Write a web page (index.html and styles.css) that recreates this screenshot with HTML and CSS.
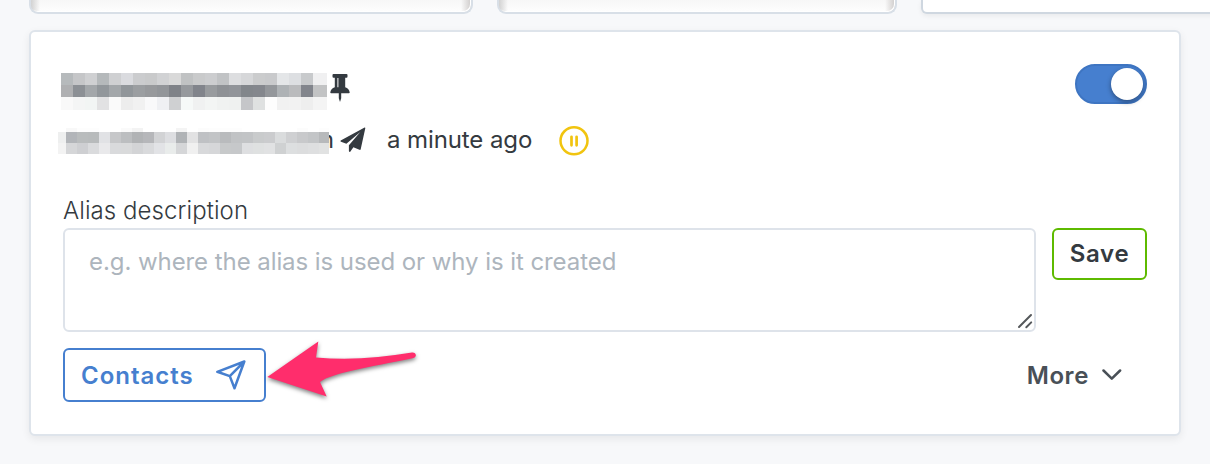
FILE: index.html
```html
<!DOCTYPE html>
<html lang="en">
<head>
<meta charset="utf-8">
<title>Aliases</title>
<link rel="stylesheet" href="styles.css">
</head>
<body>
<div class="filters">
  <div class="filter filter-search"></div>
  <div class="filter filter-sort"></div>
  <div class="filter-button"></div>
</div>
<main class="card">
  <header class="head">
    <div class="identity">
      <div class="alias-row">
        <svg class="mosaic" id="alias-mosaic" width="269" height="48"></svg>
        <svg class="pin" width="20" height="28" viewBox="0 0 20 28" fill="#343a40"><path d="M3.500 0h13q1 0 1 1v1.600q0 1.200-1 1.200h-1.300v9.400c2.600.8 4.300 2.600 4.500 5.300q0 .7-.8.700h-7.700v5l-1.200 3.800-1.200-3.800v-5H1.100q-.8 0-.8-.7c.2-2.700 1.900-4.500 4.500-5.300V3.800H3.500q-1 0-1-1.200V1q0-1 1-1z"/><path d="M7.400 4h1v9.300h-1z" fill="#fff"/></svg>
      </div>
      <div class="activity-row">
        <svg class="mosaic" id="mailbox-mosaic" width="271" height="30"></svg>
        <span class="mailbox-tail">m</span>
        <svg class="sent" width="26" height="26" viewBox="0 0 26 26" fill="#343a40"><path d="M24.600.5.700 13.600q-.7.700.3 1.100l5.400 2.100L20.300 5 8.900 18.200v5.900c.1.900 1 1.100 1.500.3l3-4.100 6 2.500c.8.300 1.200 0 1.300-.6L25.300 1.200q.1-.9-.7-.7z"/></svg>
        <span class="time">a minute ago</span>
        <svg class="pause" width="30" height="30" viewBox="0 0 30 30" fill="none" stroke="#f1c40f"><circle cx="15" cy="14.800" r="13.500" stroke-width="2.500"/><path d="M12.500 10.800v8.500M17.600 10.800v8.500" stroke-width="2.700" stroke-linecap="round"/></svg>
      </div>
    </div>
    <div class="switch"><span class="knob"></span></div>
  </header>
  <div class="label">Alias description</div>
  <div class="description">
    <div class="textarea">
      <span>e.g. where the alias is used or why is it created</span>
      <svg class="grip" width="16" height="16" viewBox="0 0 16 16" stroke="#55585b" stroke-width="2" stroke-linecap="round"><path d="M2 14 14 2M9.300 14.300l4.900-4.900"/></svg>
    </div>
    <div class="save">Save</div>
  </div>
  <footer class="foot">
    <div class="contacts">
      <span>Contacts</span>
      <svg width="30" height="30" viewBox="0 0 30 30" fill="none" stroke="#467fcf" stroke-width="2.500" stroke-linejoin="round"><path d="M28.300 1.500 1.300 11.800l12.500 4.300 4.700 12.200zM28.300 1.500 13.800 16.100"/></svg>
    </div>
    <div class="more">
      <span>More</span>
      <svg width="20" height="12" viewBox="0 0 20 12" fill="none" stroke="#495057" stroke-width="2.500" stroke-linecap="round" stroke-linejoin="round"><path d="m1.500 1.500 8.300 8.200 8.300-8.200"/></svg>
    </div>
    <svg class="arrow" width="160" height="66" viewBox="0 0 160 66"><path d="M2.300 41 53.300 5.500 51 21.500C83 24.500 115 22 147 16.500 151 16 152.500 20.500 148.500 22 120 28.500 67 36 55 46L61.700 60.500z" fill="#ff2d6c"/></svg>
  </footer>
</main>
<script src="mosaic.js"></script>
</body>
</html>
```

FILE: styles.css
```css
* { box-sizing: border-box; }
body {
  margin: 0;
  width: 1210px;
  height: 464px;
  overflow: hidden;
  background: #f7f8fa;
  color: #343a40;
  font-family: Inter, "Liberation Sans", sans-serif;
  font-size: 24px;
  line-height: 30px;
}
svg { display: block; flex: none; }
.filters { display: flex; height: 14px; padding-left: 29px; }
.filter {
  height: 14px;
  border: 2px solid #d8dfe7;
  border-top: 0;
  border-radius: 0 0 9px 9px;
  background:
    linear-gradient(90deg, #d2d2d2, transparent 9px, transparent calc(100% - 10px), #cfcccb),
    linear-gradient(#f7f7f7, #fefefe);
  box-shadow: inset -1px -1px 0 #fff;
  flex: none;
}
.filter-search { width: 444px; }
.filter-sort { width: 400px; margin-left: 24px; }
.filter-button {
  width: 330px;
  flex: none;
  margin-left: 24px;
  border: 2px solid #cfd7e0;
  border-top: 0;
  border-radius: 0 0 0 6px;
  background: #fff;
  box-shadow: 0 2px 5px rgba(0, 0, 0, .06);
}
.card {
  width: 1152px;
  height: 406px;
  margin: 16px 0 0 29px;
  padding: 32px 32px 0;
  border: 2px solid #dee4eb;
  border-radius: 6px;
  background: #fff;
  box-shadow: 0 3px 8px rgba(0, 0, 0, .07);
}
.head { display: flex; justify-content: space-between; height: 130px; }
.alias-row { display: flex; margin-left: -5px; height: 61px; }
.pin { margin: 10px 0 0 3px; }
.activity-row { display: flex; margin-left: -5px; height: 30px; }
.mosaic { position: relative; z-index: 1; }
.mailbox-tail { width: 21px; margin-left: -16px; }
.sent { margin: 2px 0 0 6px; }
.time { margin: 0 0 0 21px; width: 147px; letter-spacing: -.1px; white-space: nowrap; }
.pause { margin: 1px 0 0 25px; }
.switch {
  display: flex;
  justify-content: flex-end;
  align-items: center;
  width: 72px;
  height: 40px;
  padding-right: 2px;
  border: 2px solid #3e75c2;
  border-radius: 20px;
  background: #467fcf;
}
.knob { width: 32px; height: 32px; border-radius: 50%; background: #fff; box-shadow: 0 2px 5px rgba(0, 0, 0, .4); }
.label { height: 34px; padding-top: 2px; font-weight: 300; letter-spacing: .07px; }
.description { display: flex; justify-content: space-between; align-items: flex-start; }
.textarea {
  display: flex;
  justify-content: space-between;
  width: 973px;
  height: 104px;
  padding: 17px 1px 1px 24px;
  border: 2px solid #dee3ea;
  border-radius: 6px;
  color: #adb5bd;
  letter-spacing: -.07px;
}
.grip { align-self: flex-end; }
.save {
  width: 95px;
  height: 52px;
  padding-top: 9px;
  border: 2px solid #5eba00;
  border-radius: 6px;
  font-weight: 600;
  letter-spacing: .7px;
  text-align: center;
}
.foot { position: relative; display: flex; justify-content: space-between; margin-top: 16px; }
.contacts {
  display: flex;
  justify-content: space-between;
  width: 203px;
  height: 54px;
  padding: 10px 18px 0 16px;
  border: 2px solid #467fcf;
  border-radius: 6px;
  color: #467fcf;
  font-weight: 600;
  letter-spacing: 1px;
}
.contacts span { padding-top: 1px; }
.more { display: flex; gap: 13px; padding: 13px 25px 0 0; color: #495057; font-weight: 600; letter-spacing: .6px; }
.more svg { margin-top: 8px; }
.arrow { position: absolute; left: 202px; top: -12px; filter: drop-shadow(0 2px 2px rgba(0, 0, 0, .5)); }
```

FILE: mosaic.js
```js
// Paints rows of flat tiles over the redacted addresses.
function paint(id, xs, ys, rows) {
  const svg = document.getElementById(id);
  rows.forEach((row, r) => row.split(" ").forEach((color, c) => {
    const rect = document.createElementNS("http://www.w3.org/2000/svg", "rect");
    rect.setAttribute("x", xs[c]);
    rect.setAttribute("y", ys[r]);
    rect.setAttribute("width", xs[c + 1] - xs[c]);
    rect.setAttribute("height", ys[r + 1] - ys[r]);
    rect.setAttribute("fill", "#" + color);
    svg.appendChild(rect);
  }));
}
const aliasXs = Array.from({ length: 23 }, (_, i) => i === 22 ? 269 : 3 + i * 12);
paint("alias-mosaic", aliasXs, [9, 21, 33, 46], [
  "b6babc c5c6c8 cfd0d2 b5b9bb cfd0d2 dadbdf cbccce c9cacb d1d2d4 d9d9d9 c0c2c3 c9cacb cccdcf c1c3c5 dddee0 d6d7d9 cbcccd c9cacc e4e6e8 dddfe2 c8cacc f0f0f1",
  "afb0b2 8c9095 a3a7aa 92979b a3a7aa 91969a 9b9ea1 97999c 929599 7f8288 96999d 81848b 989b9e 8e9195 919499 82868b 84878d 94979b aeb2b5 babbbd 82858c c2c3c4",
  "f9f9f9 f4f5f5 f2f5f4 e2e2e3 fafafa ededed f1f1f1 f9f9fa eff0f3 cfd0d2 f6f9f8 f0f1f1 f3f5f4 f0f2f1 eff1f0 c5c6c9 dfe1e1 fdfdfd f1f1f1 f2f2f2 eeeeee f4f4f4"
]);
const mailXs = [0, 8];
for (let x = 19; x < 271; x += 11) mailXs.push(x);
mailXs.push(271);
paint("mailbox-mosaic", mailXs, [3, 7, 18, 29], [
  "ffffff f8f8f8 fdfdfd fdfdfd ffffff ffffff fafafa f3f3f3 ffffff ffffff ffffff f4f4f4 ffffff fcfcfc fdfdfd fdfdfd fdfdfd ffffff ffffff ffffff ffffff ffffff fcfcfc ffffff fdfdfd",
  "eeefef b2b5b9 b9bcbd b8bbbc e1e2e5 c6c7c9 bcbec0 b1b3b5 b6b7ba d2d3d5 dddee1 b0b3b6 e2e2e3 bfc1c4 c2c4c6 b9bbbd c1c3c5 c2c4c6 c9cbcc cbccce dadcdd cfd0d2 c8c9cb c3c5c7 b7b9bb",
  "f3f3f3 d5d6d8 cecfd2 dadbdd e9e9eb d9dadc d9dadb d3d4d6 d9dadc e2e3e6 e9eceb d5d6d8 f0f0f0 d8d9db d6d7d9 c7c9ca c6c8ca dedfe1 dfe1e1 e1e2e3 cfd1d2 dddfe0 dcddde dedfe0 e1e2e2"
]);
```
